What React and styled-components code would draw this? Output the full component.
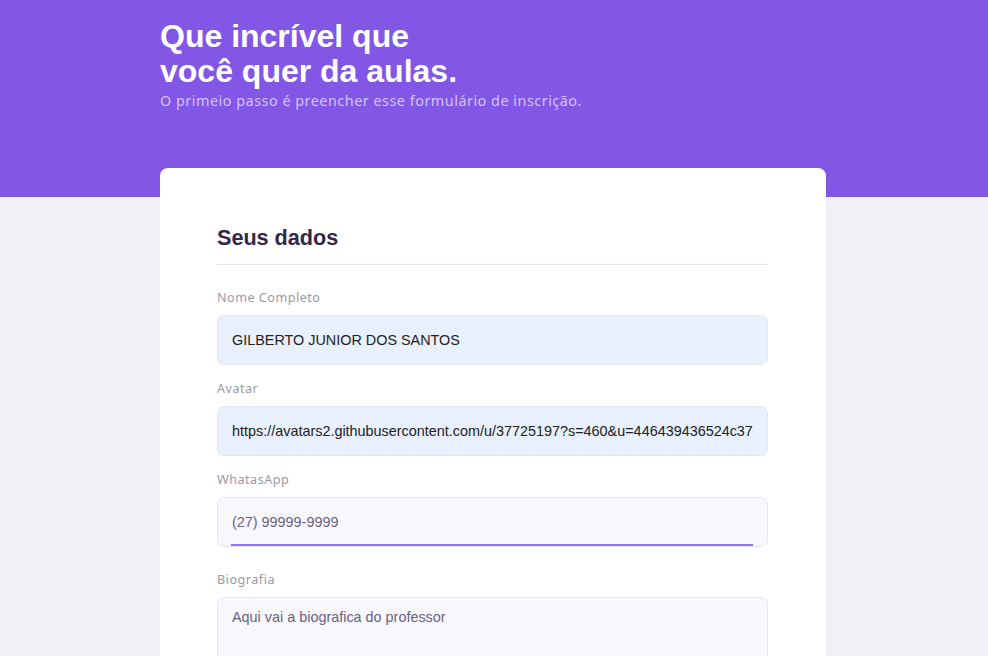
import React, { useState } from 'react';
import styled, { createGlobalStyle } from 'styled-components';

const GlobalStyle = createGlobalStyle`
  * {
    margin: 0;
    padding: 0;
    box-sizing: border-box;
  }

  body {
    background: #f0f0f7;
    font-family: 'Noto Sans', sans-serif;
  }
`;

const Page = styled.div`
  min-height: 656px;
`;

const Header = styled.header`
  background: #8257e5;
  height: 197px;
`;

const HeaderContent = styled.div`
  width: 666px;
  margin-left: calc(50% - 334px);
  padding-top: 19px;
`;

const Title = styled.h1`
  font-family: 'Liberation Sans', Arial, sans-serif;
  font-weight: 700;
  font-size: 32px;
  line-height: 35px;
  color: #fff;
`;

const Subtitle = styled.p`
  font-family: 'Noto Sans', sans-serif;
  font-size: 14.4px;
  line-height: 20px;
  letter-spacing: 0.5px;
  color: #d4c2ff;
  margin-top: 2px;
`;

const Card = styled.main`
  width: 666px;
  margin: -29px 0 0 calc(50% - 334px);
  background: #fff;
  border-radius: 8px 8px 0 0;
  padding: 57px 58px 40px 57px;
  min-height: 520px;
`;

const Fieldset = styled.fieldset`
  border: 0;
`;

const Legend = styled.legend`
  width: 100%;
  font-family: 'Liberation Sans', Arial, sans-serif;
  font-weight: 700;
  font-size: 21.6px;
  color: #32264d;
  padding-bottom: 13px;
  border-bottom: 1px solid #e6e6f0;
  margin-bottom: 24px;
`;

const Field = styled.div`
  position: relative;
  margin-top: ${(p) => p.$gap || 0}px;
`;

const Label = styled.label`
  display: block;
  font-family: 'Noto Sans', sans-serif;
  font-size: 12.6px;
  line-height: 18px;
  letter-spacing: 0.5px;
  color: #9c98a6;
  margin-bottom: 8px;
`;

const Input = styled.input`
  display: block;
  width: 100%;
  height: 50px;
  border-radius: 7px;
  border: 1px solid #e6e6f0;
  background: ${(p) => (p.$filled ? '#e8f0fe' : '#f8f8fc')};
  outline: 0;
  padding: 0 14px;
  font-family: 'Liberation Sans', Arial, sans-serif;
  font-size: 14.4px;
  color: ${(p) => (p.$filled ? '#222' : '#6a6180')};
`;

const FocusLine = styled.span`
  position: absolute;
  left: 14px;
  right: 15px;
  bottom: 1px;
  height: 2px;
  background: #9871f5;
`;

const TextArea = styled.textarea`
  display: block;
  width: 100%;
  height: 150px;
  border-radius: 7px;
  border: 1px solid #e6e6f0;
  background: #f8f8fc;
  outline: 0;
  resize: vertical;
  padding: 10px 14px;
  font-family: 'Liberation Sans', Arial, sans-serif;
  font-size: 14.4px;
  line-height: 18px;
  color: #6a6180;
`;

export default function App() {
  const [form, setForm] = useState({
    name: 'GILBERTO JUNIOR DOS SANTOS',
    avatar:
      'https://avatars2.githubusercontent.com/u/37725197?s=460&u=446439436524c37',
    whatsapp: '(27) 99999-9999',
    bio: 'Aqui vai a biografica do professor',
  });

  const set = (key) => (e) => setForm({ ...form, [key]: e.target.value });

  return (
    <Page>
      <GlobalStyle />
      <Header>
        <HeaderContent>
          <Title>
            Que incrível que
            <br />
            você quer da aulas.
          </Title>
          <Subtitle>O primeio passo é preencher esse formulário de inscrição.</Subtitle>
        </HeaderContent>
      </Header>

      <Card>
        <Fieldset>
          <Legend>Seus dados</Legend>

          <Field>
            <Label htmlFor="name">Nome Completo</Label>
            <Input id="name" $filled value={form.name} onChange={set('name')} />
          </Field>

          <Field $gap={15}>
            <Label htmlFor="avatar">Avatar</Label>
            <Input id="avatar" $filled value={form.avatar} onChange={set('avatar')} />
          </Field>

          <Field $gap={15}>
            <Label htmlFor="whatsapp">WhatasApp</Label>
            <Input id="whatsapp" value={form.whatsapp} onChange={set('whatsapp')} />
            <FocusLine />
          </Field>

          <Field $gap={24}>
            <Label htmlFor="bio">Biografia</Label>
            <TextArea id="bio" value={form.bio} onChange={set('bio')} />
          </Field>
        </Fieldset>
      </Card>
    </Page>
  );
}
